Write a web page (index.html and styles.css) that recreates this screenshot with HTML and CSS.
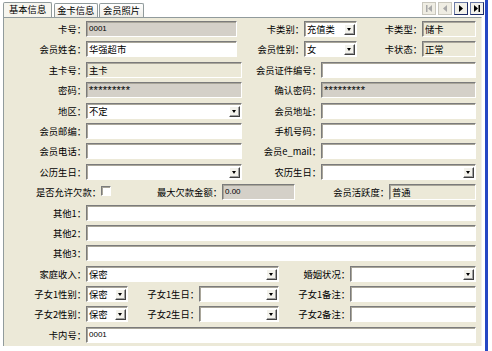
FILE: index.html
```html
<!DOCTYPE html>
<html lang="zh-CN">
<head>
<meta charset="utf-8">
<link rel="stylesheet" href="styles.css">
</head>
<body>
<div class="window">
  <div class="main">
    <div class="tabstrip">
      <div class="tab active">基本信息</div>
      <div class="tab">金卡信息</div>
      <div class="tab">会员照片</div>
      <div class="nav">
        <span class="nb dis"><svg width="12" height="11" viewBox="0 0 12 11"><rect x="3" y="2" width="1.5" height="7" fill="#a8a8a8"/><path d="M9 2 L5 5.5 L9 9 Z" fill="#a8a8a8"/></svg></span>
        <span class="nb dis"><svg width="12" height="11" viewBox="0 0 12 11"><path d="M8 2 L4 5.5 L8 9 Z" fill="#a8a8a8"/></svg></span>
        <span class="nb on"><svg width="12" height="11" viewBox="0 0 12 11"><path d="M4 2 L8 5.5 L4 9 Z" fill="#000"/></svg></span>
        <span class="nb on"><svg width="12" height="11" viewBox="0 0 12 11"><path d="M3 2 L7 5.5 L3 9 Z" fill="#000"/><rect x="7.5" y="2" width="1.5" height="7" fill="#000"/></svg></span>
      </div>
    </div>
    <div class="panel">
      <div class="row">
        <span class="lbl w82">卡号：</span><span class="f gray w151"><span class="num">0001</span></span>
        <span class="lbl w67">卡类别：</span><span class="f sel w53"><span class="t">充值类</span><span class="dd"></span></span>
        <span class="lbl w65">卡类型：</span><span class="f beige w54"><span class="t">储卡</span></span>
      </div>
      <div class="row">
        <span class="lbl w82">会员姓名：</span><span class="f w151"><span class="t">华强超市</span></span>
        <span class="lbl w67">会员性别：</span><span class="f sel w53"><span class="t">女</span><span class="dd"></span></span>
        <span class="lbl w65">卡状态：</span><span class="f beige w54"><span class="t">正常</span></span>
      </div>
      <div class="row">
        <span class="lbl w82">主卡号：</span><span class="f beige w156"><span class="t">主卡</span></span>
        <span class="lbl w79">会员证件编号：</span><span class="f w155"></span>
      </div>
      <div class="row">
        <span class="lbl w82">密码：</span><span class="f gray w156"><span class="pw">*********</span></span>
        <span class="lbl w79">确认密码：</span><span class="f gray w155"><span class="pw">*********</span></span>
      </div>
      <div class="row">
        <span class="lbl w82">地区：</span><span class="f sel w156"><span class="t">不定</span><span class="dd"></span></span>
        <span class="lbl w79">会员地址：</span><span class="f w155"></span>
      </div>
      <div class="row">
        <span class="lbl w82">会员邮编：</span><span class="f w156"></span>
        <span class="lbl w79">手机号码：</span><span class="f w155"></span>
      </div>
      <div class="row">
        <span class="lbl w82">会员电话：</span><span class="f w156"></span>
        <span class="lbl w79">会员e_mail：</span><span class="f w155"></span>
      </div>
      <div class="row">
        <span class="lbl w82">公历生日：</span><span class="f sel w156"><span class="t"></span><span class="dd"></span></span>
        <span class="lbl w79">农历生日：</span><span class="f sel w155"><span class="t"></span><span class="dd"></span></span>
      </div>
      <div class="row">
        <span class="lbl w97">是否允许欠款：</span><span class="cb"></span>
        <span class="lbl w111">最大欠款金额：</span><span class="f gray w73"><span class="num">0.00</span></span>
        <span class="lbl w94">会员活跃度：</span><span class="f beige w87"><span class="t">普通</span></span>
      </div>
      <div class="row">
        <span class="lbl w82">其他1：</span><span class="f w390"></span>
      </div>
      <div class="row">
        <span class="lbl w82">其他2：</span><span class="f w390"></span>
      </div>
      <div class="row">
        <span class="lbl w82">其他3：</span><span class="f w390"></span>
      </div>
      <div class="row">
        <span class="lbl w82">家庭收入：</span><span class="f sel w193"><span class="t">保密</span><span class="dd"></span></span>
        <span class="lbl w71">婚姻状况：</span><span class="f sel w126"><span class="t"></span><span class="dd"></span></span>
      </div>
      <div class="row">
        <span class="lbl w82">子女1性别：</span><span class="f sel w42"><span class="t">保密</span><span class="dd"></span></span>
        <span class="lbl w71">子女1生日：</span><span class="f sel w80"><span class="t"></span><span class="dd"></span></span>
        <span class="lbl w71">子女1备注：</span><span class="f w126"></span>
      </div>
      <div class="row">
        <span class="lbl w82">子女2性别：</span><span class="f sel w42"><span class="t">保密</span><span class="dd"></span></span>
        <span class="lbl w71">子女2生日：</span><span class="f sel w80"><span class="t"></span><span class="dd"></span></span>
        <span class="lbl w71">子女2备注：</span><span class="f w126"></span>
      </div>
      <div class="row">
        <span class="lbl w82">卡内号：</span><span class="f w390"><span class="num">0001</span></span>
      </div>
    </div>
  </div>
  <div class="blue"></div>
</div>
</body>
</html>
```
FILE: styles.css
```css
* { box-sizing: border-box; }
html, body { margin: 0; padding: 0; background: #fff; }
body {
  font-family: "Noto Sans CJK SC", "Noto Sans", sans-serif;
  font-size: 9.3px;
  color: #000;
}
.window { display: flex; width: 492px; height: 351px; }
.main { width: 485px; flex: none; }
.blue { width: 3px; flex: none; background: #2547c4; }

.tabstrip {
  height: 17px;
  display: flex;
  align-items: flex-end;
  padding-left: 3px;
}
.tab {
  height: 14px;
  line-height: 13px;
  padding: 0 2.5px;
  border: 1px solid #919b9c;
  border-bottom: none;
  border-radius: 2px 2px 0 0;
  background: linear-gradient(#ffffff, #efeee8);
  white-space: nowrap;
  margin-right: 1.5px;
}
.tab.active {
  height: 15px;
  padding: 0 5px;
  background: #f6f5ee;
}
.nav {
  margin-left: auto;
  align-self: flex-start;
  margin-top: 2px;
  margin-right: 1px;
  display: flex;
  gap: 2px;
}
.nb {
  width: 14px;
  height: 13px;
  display: flex;
  align-items: center;
  justify-content: center;
  border: 1px solid #c9c7bd;
  background: #efede3;
}
.nb.on {
  border-color: #6b7aa6 #1b2a66 #1b2a66 #6b7aa6;
  background: #f2f1ea;
}

.panel {
  margin-left: 3px;
  width: 479px;
  height: 329px;
  background: #ece9d8;
  border: 1px solid #919b9c;
  border-right-color: #f4f3ee;
  border-bottom: none;
  padding-top: 3px;
  display: flex;
  flex-direction: column;
  gap: 4.4px;
}
.row {
  height: 16px;
  display: flex;
  align-items: center;
  flex: none;
}
.lbl {
  flex: none;
  text-align: right;
  white-space: nowrap;
  line-height: 16px;
}
.f {
  flex: none;
  height: 16px;
  background: #fff;
  border: 1px solid;
  border-color: #7b7b7b #ffffff #ffffff #7b7b7b;
  box-shadow: inset 1px 1px 0 #a9a69a;
  display: flex;
  align-items: center;
  padding-left: 2px;
  overflow: hidden;
}
.f.gray { background: #d4d0c8; }
.f.beige { background: #ece9d8; }
.t { flex: 1; white-space: nowrap; line-height: 14px; }
.num {
  font-family: "Liberation Sans", sans-serif;
  font-size: 8px;
  line-height: 14px;
}
.pw {
  font-family: "Liberation Sans", sans-serif;
  font-size: 11px;
  line-height: 14px;
  height: 14px;
  letter-spacing: 0.3px;
}
.dd {
  flex: none;
  width: 11px;
  height: 11px;
  margin: 0 1px 1px 0;
  align-self: flex-end;
  background: #f3f2ec;
  border: 1px solid;
  border-color: #ffffff #404040 #404040 #ffffff;
  box-shadow: inset -1px -1px 0 #a0a0a0;
  position: relative;
}
.dd::after {
  content: "";
  position: absolute;
  left: 2px;
  top: 3px;
  border-left: 2.5px solid transparent;
  border-right: 2.5px solid transparent;
  border-top: 3px solid #000;
}
.cb {
  flex: none;
  width: 10px;
  height: 10px;
  margin-top: -3px;
  background: #fff;
  border: 1px solid;
  border-color: #7b7b7b #ffffff #ffffff #7b7b7b;
  box-shadow: inset 1px 1px 0 #a9a69a;
}

.w42 { width: 42px; }
.w53 { width: 53px; }
.w54 { width: 54px; }
.w65 { width: 65px; }
.w67 { width: 67px; }
.w71 { width: 71px; }
.w73 { width: 73px; }
.w79 { width: 79px; }
.w80 { width: 80px; }
.w82 { width: 82px; }
.w87 { width: 87px; }
.w94 { width: 94px; }
.w97 { width: 97px; }
.w111 { width: 111px; }
.w126 { width: 126px; }
.w151 { width: 151px; }
.w155 { width: 155px; }
.w156 { width: 156px; }
.w193 { width: 193px; }
.w390 { width: 390px; }
```
